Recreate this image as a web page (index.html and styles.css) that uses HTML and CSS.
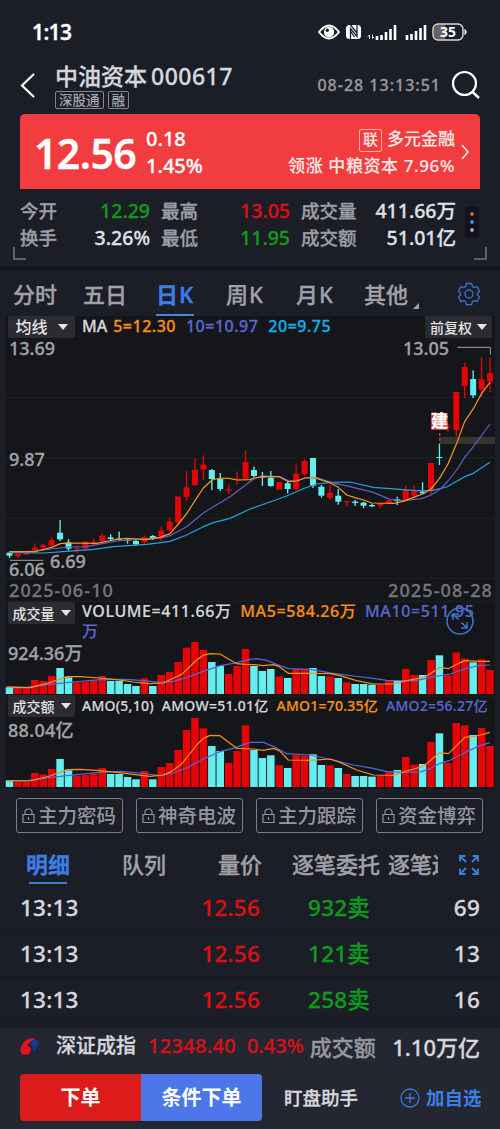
FILE: index.html
```html
<!DOCTYPE html>
<html lang="zh-CN">
<head>
    <meta charset="UTF-8">
    <meta name="viewport" content="width=device-width, initial-scale=1.0">
    <title>中油资本 000617</title>
    <link rel="stylesheet" href="styles.css">
</head>
<body>

    <div class="status">
        <span class="clock">1:13</span>
        <svg class="status-icons" width="152" height="20" viewBox="0 0 152 20">
            <path d="M3 10 Q13 -3 23 10 Q13 23 3 10Z" fill="none" stroke="#fff" stroke-width="2"/>
            <circle cx="13" cy="10" r="5.2" fill="#fff"/>
            <circle cx="11.300" cy="8.200" r="1.700" fill="#1b1d27"/>
            <rect x="30" y="3" width="15" height="14" rx="3.500" fill="#fff"/>
            <path d="M34.500 17V6.500l6.500 8V3M34.500 3l6.500 8M34.500 9l4 6" fill="none" stroke="#1b1d27" stroke-width="1.300"/>
            <path d="M53.500 13v4M52 14.500l1.500-1.500M56.500 12.500v4l1.500-1.500" fill="none" stroke="#fff" stroke-width="1"/>
            <path d="M61 18v-4M65.500 18v-5M70 18v-8M74.500 18V7M79 18V3" stroke="#fff" stroke-width="2.600"/>
            <path d="M91 18v-5M95.500 18v-6M100 18V9M104.500 18V6M109 18V3" stroke="#fff" stroke-width="2.600"/>
            <rect x="117" y="2" width="30" height="16" rx="5" fill="#1b1d27" stroke="#ddd" stroke-width="1.400"/>
            <path d="M122 3h7v14h-7q-4 0-4-4V7q0-4 4-4z" fill="#62636b"/>
            <path d="M149 7.500q2.500 2.500 0 5z" fill="#fff" stroke="#fff"/>
            <text x="132" y="15" text-anchor="middle" class="battery">35</text>
        </svg>
    </div>

    <div class="header">
        <svg class="back" width="16" height="26" viewBox="0 0 16 26"><path d="M14 2L2 13.500 14 25" fill="none" stroke="#fff" stroke-width="2.200"/></svg>
        <div class="stock">
            <div class="stock-name">中油资本<span>000617</span></div>
            <div class="tags"><span>深股通</span><span>融</span></div>
        </div>
        <span class="datetime">08-28 13:13:51</span>
        <svg width="30" height="30" viewBox="0 0 30 30"><circle cx="13.500" cy="13.500" r="11.500" fill="none" stroke="#fff" stroke-width="2.200"/><path d="M21.500 22l6.500 6" stroke="#fff" stroke-width="2.400"/></svg>
    </div>

    <div class="quote">
        <span class="price">12.56</span>
        <div class="change"><span>0.18</span><span>1.45%</span></div>
        <div class="sector">
            <div><i>联</i>多元金融</div>
            <div class="leader">领涨 中粮资本 7.96%</div>
        </div>
        <svg width="9" height="16" viewBox="0 0 9 16"><path d="M1 1l6 7-6 7" fill="none" stroke="#fff" stroke-width="1.300"/></svg>
    </div>

    <div class="stats">
        <div class="stats-grid">
            <span>今开</span><b class="green">12.29</b><span>最高</span><b class="red">13.05</b><span>成交量</span><b>411.66万</b>
            <span>换手</span><b>3.26%</b><span>最低</span><b class="green">11.95</b><span>成交额</span><b>51.01亿</b>
        </div>
        <div class="dots"><i></i><i></i><i></i></div>
        <div class="corners"></div>
    </div>

    <div class="period">
        <span>分时</span>
        <span>五日</span>
        <span class="k on">日K</span>
        <span class="k">周K</span>
        <span class="k">月K</span>
        <span class="more">其他</span>
        <svg class="gear" width="24" height="24" viewBox="0 0 24 24" fill="none" stroke="#3a76d0" stroke-width="1.300" stroke-linejoin="round">
            <path d="M9.300 1.500h5.400l.7 3 1.600 1 3-.9 2.600 4.600-2.200 2.200v1.400l2.200 2.200-2.600 4.600-3-.9-1.600 1-.7 3H9.300l-.7-3-1.600-1-3 .9L1.400 15l2.200-2.200v-1.400L1.400 9.200 4 4.600l3 .9 1.600-1z"/>
            <circle cx="12" cy="12" r="4"/>
        </svg>
    </div>

    <div class="charts">
        <div class="legend">
            <span class="select">均线<i></i></span>
            <span class="ma">MA</span>
            <span class="ma ma5">5=12.30</span>
            <span class="ma ma10">10=10.97</span>
            <span class="ma ma20">20=9.75</span>
            <span class="select right">前复权<i></i></span>
        </div>

        <div class="panel kline">
            <svg id="kline" width="500" height="262" viewBox="0 24 1500 786"></svg>
            <span class="label l-top">13.69</span>
            <span class="label l-mid">9.87</span>
            <span class="label l-bot">6.06</span>
            <span class="label l-low">6.69</span>
            <span class="label l-high">13.05</span>
            <span class="build">建</span>
            <div class="dates"><span>2025-06-10</span><span>2025-08-28</span></div>
        </div>

        <div class="panel volume">
            <svg id="volume" width="500" height="96" viewBox="0 15 1500 288"></svg>
            <span class="select over">成交量<i></i></span>
            <div class="vol-text">VOLUME=411.66万&ensp;<span class="ma5">MA5=584.26万</span>&ensp;<span class="ma10">MA10=511.95<br>万</span></div>
            <span class="label l-vol">924.36万</span>
            <svg class="expand" width="28" height="28" viewBox="0 0 28 28" fill="none" stroke="#3a76d0" stroke-width="1.600">
                <circle cx="14" cy="14" r="13"/>
                <path d="M7 13V7h6M7 7l5.500 5.500M21 15v6h-6M21 21l-5.500-5.500"/>
            </svg>
        </div>

        <div class="panel amount">
            <svg id="amount" width="500" height="93" viewBox="0 303 1500 279"></svg>
            <span class="select over">成交额<i></i></span>
            <div class="amo-text"><span>AMO(5,10)</span><span>AMOW=51.01亿</span><span class="ma5">AMO1=70.35亿</span><span class="ma10">AMO2=56.27亿</span></div>
            <span class="label l-amo">88.04亿</span>
        </div>
    </div>

    <div class="locks">
        <span><svg width="13" height="16" viewBox="0 0 13 16"><path d="M1 6.500h11v8H1zM3 6.500V4q0-3 3.500-3T10 4v2.500M6.500 9v3"/></svg>主力密码</span>
        <span><svg width="13" height="16" viewBox="0 0 13 16"><path d="M1 6.500h11v8H1zM3 6.500V4q0-3 3.500-3T10 4v2.500M6.500 9v3"/></svg>神奇电波</span>
        <span><svg width="13" height="16" viewBox="0 0 13 16"><path d="M1 6.500h11v8H1zM3 6.500V4q0-3 3.500-3T10 4v2.500M6.500 9v3"/></svg>主力跟踪</span>
        <span><svg width="13" height="16" viewBox="0 0 13 16"><path d="M1 6.500h11v8H1zM3 6.500V4q0-3 3.500-3T10 4v2.500M6.500 9v3"/></svg>资金博弈</span>
    </div>

    <div class="detail-tabs">
        <span class="on">明细</span>
        <span>队列</span>
        <span>量价</span>
        <span>逐笔委托</span>
        <span class="cut">逐笔还原</span>
        <svg width="20" height="20" viewBox="0 0 20 20" fill="none" stroke="#3a80e0" stroke-width="1.800"><path d="M1 6.500V1h5.500M1 1l6 6M13.500 1H19v5.500M19 1l-6 6M1 13.500V19h5.500M1 19l6-6M19 13.500V19h-5.500M19 19l-6-6"/></svg>
    </div>

    <div class="trades">
        <div><span>13:13</span><span class="red">12.56</span><span class="green">932卖</span><span>69</span></div>
        <div><span>13:13</span><span class="red">12.56</span><span class="green">121卖</span><span>13</span></div>
        <div><span>13:13</span><span class="red">12.56</span><span class="green">258卖</span><span>16</span></div>
    </div>

    <div class="footer">
        <div class="index">
            <svg width="20" height="20" viewBox="0 0 20 20">
                <path d="M11 4Q18 0 18.500 6Q18 11 13.500 14Q13 9 10.500 8Z" fill="#143a94"/>
                <path d="M16 1.500Q6 0 2 8Q-2 15 3 17.500Q10 19 11 13Q11 9 7.500 9.500Q9 4 16 1.500Z" fill="#e01424"/>
            </svg>
            <span class="idx-name">深证成指</span>
            <span class="idx-num">12348.40</span>
            <span class="idx-pct">0.43%</span>
            <span class="idx-label">成交额</span>
            <span class="idx-total">1.10万亿</span>
        </div>
        <div class="actions">
            <span class="order">下单</span>
            <span class="cond">条件下单</span>
            <span class="helper">盯盘助手</span>
            <span class="add"><svg width="20" height="20" viewBox="0 0 20 20" fill="none" stroke="#3a7be0" stroke-width="1.300"><circle cx="10" cy="10" r="9"/><path d="M10 5v10M5 10h10"/></svg>加自选</span>
        </div>
    </div>

    <script src="chart.js"></script>
</body>
</html>
```
FILE: styles.css
```css
body {
    margin: 0;
    width: 500px;
    height: 1129px;
    overflow: hidden;
    background: #1b1d27;
    color: #d6d7db;
    font-family: "Noto Sans", "Noto Sans CJK SC", sans-serif;
    font-weight: 500;
    -webkit-text-stroke: 0.3px;
}
div, span, svg {
    box-sizing: border-box;
}
span, b {
    white-space: nowrap;
}
svg {
    display: block;
    flex: none;
}
i {
    font-style: normal;
}
.red { color: #dc0f14 !important; }
.green { color: #0f9a1b !important; }
.ma5 { color: #f78f14; }
.ma10 { color: #5867cf; }
.ma20 { color: #14aee6; }

/* status bar */
.status {
    height: 62px;
    padding: 1px 32px 0;
    display: flex;
    align-items: center;
    justify-content: space-between;
}
.clock {
    color: #fff;
    font-size: 21px;
    font-weight: 600;
    letter-spacing: -0.6px;
}
.battery {
    fill: #fff;
    font-size: 14px;
    font-weight: 700;
    -webkit-text-stroke: 0;
}

/* title */
.header {
    height: 52px;
    padding: 0 19px 0 20px;
    display: flex;
    align-items: center;
}
.header > svg {
    margin-top: -6px;
}
.header > .back {
    margin-top: -6px;
}
.stock {
    margin-left: 19px;
    flex: 1;
}
.stock-name {
    font-size: 23px;
    line-height: 26px;
    height: 28px;
    white-space: nowrap;
}
.stock-name span {
    margin-left: 4px;
    letter-spacing: 0.5px;
}
.tags {
    display: flex;
    gap: 4px;
    height: 18px;
    margin-bottom: 4px;
}
.tags span {
    border: 1px solid #85868e;
    border-radius: 2px;
    padding: 0 3px;
    color: #a5a6ad;
    font-size: 13.500px;
    line-height: 16px;
    -webkit-text-stroke: 0;
}
.datetime {
    color: #96979e;
    font-size: 16px;
    letter-spacing: 1px;
    margin: -6px 10px 0 0;
}

/* red quote card */
.quote {
    height: 75px;
    margin: 0 20px;
    padding: 0 10px 0 14px;
    border-radius: 5px 5px 0 0;
    background: #f13d3f;
    color: #fff;
    display: flex;
    align-items: center;
}
.price {
    font-size: 41px;
    font-weight: 600;
    letter-spacing: -0.6px;
    width: 112px;
    padding-top: 2px;
}
.change, .sector {
    display: flex;
    flex-direction: column;
    font-size: 20px;
    line-height: 27px;
    padding-top: 1px;
}
.sector {
    flex: 1;
    align-items: flex-end;
    font-size: 17px;
    margin-right: 6px;
    white-space: nowrap;
    color: #ffe8e6;
    -webkit-text-stroke: 0.1px;
}
.leader {
    letter-spacing: 0.6px;
}
.sector i {
    display: inline-block;
    width: 21px;
    height: 21px;
    border: 1px solid #f9b0b0;
    border-radius: 2px;
    font-size: 15px;
    line-height: 19px;
    text-align: center;
    margin-right: 5px;
}

/* stats */
.stats {
    position: relative;
    height: 77px;
    padding: 8px 20px 0;
    display: flex;
}
.stats-grid {
    width: 436px;
    display: grid;
    grid-template-columns: 40px 90px 50px 90px 65px 101px;
    grid-template-rows: 27px 27px;
    line-height: 27px;
    font-size: 18.500px;
    color: #9d9ea5;
}
.stats-grid span {
    padding-left: 11px;
}
.stats-grid span:nth-child(6n+1) {
    padding-left: 0;
}
.stats-grid b {
    text-align: right;
    font-weight: 500;
    font-size: 19.500px;
    color: #dfe0e4;
}
.dots {
    width: 14px;
    height: 32px;
    margin: 9px 0 0 9px;
    border-radius: 4px;
    background: #12131a;
    display: flex;
    flex-direction: column;
    align-items: center;
    justify-content: center;
    gap: 4px;
}
.dots i {
    width: 4px;
    height: 4px;
    border-radius: 50%;
    background: #c1663a;
}
.dots i:nth-child(2) { background: #4585dc; }
.dots i:nth-child(3) { background: #aaa; }
.corners::before, .corners::after {
    content: "";
    position: absolute;
    bottom: 6px;
    width: 11px;
    height: 11px;
    border-bottom: 2px solid #5f6169;
}
.corners::before {
    left: 13px;
    border-left: 2px solid #5f6169;
}
.corners::after {
    right: 13px;
    border-right: 2px solid #5f6169;
}

/* period tabs */
.period {
    height: 50px;
    border-top: 5px solid #14151b;
    padding: 0 19px 0 13px;
    display: flex;
    align-items: center;
    font-size: 22px;
    line-height: 44px;
    color: #a1a2a8;
}
.period span {
    height: 44px;
    margin-right: 26px;
}
.period .k {
    width: 38px;
    margin-right: 32px;
    letter-spacing: 1px;
}
.period .k.on {
    color: #3b7fe5;
    font-weight: 600;
    border-bottom: 2px solid #4b86dc;
    margin-left: 3px;
}
.period .more {
    position: relative;
    margin: 0 0 0 -2px;
}
.more::after {
    content: "";
    position: absolute;
    right: -11px;
    bottom: 7px;
    border: 3.500px solid #a1a2a8;
    border-top-color: transparent;
    border-left-color: transparent;
}
.period .gear {
    margin-left: auto;
}

/* charts */
.charts {
    height: 473px;
    background: linear-gradient(90deg, #1b1d27 6px, #15161a 6px, #15161a 495px, #1b1d27 495px);
}
.legend {
    height: 22px;
    padding: 0 8px;
    display: flex;
    align-items: center;
    font-size: 16px;
    line-height: 20px;
}
.select {
    height: 22px;
    width: 67px;
    background: #2b2c31;
    border-radius: 2px;
    color: #e4e4e6;
    font-size: 16px;
    line-height: 21px;
    display: flex;
    align-items: center;
    justify-content: center;
    gap: 10px;
    -webkit-text-stroke: 0;
}
.select i {
    border: 5px solid transparent;
    border-top: 6px solid #e4e4e6;
    border-bottom: 0;
}
.select.right {
    margin-left: auto;
    font-size: 14px;
    gap: 5px;
}
.ma {
    margin: -2px 0 0 7px;
}
.ma5.ma {
    margin-left: 6px;
    letter-spacing: 0.5px;
}
.ma10.ma, .ma20.ma {
    margin-left: 10px;
    letter-spacing: 0.5px;
}
.panel {
    position: relative;
}
.kline { height: 262px; }
.volume { height: 96px; }
.amount { height: 93px; }
.label {
    position: absolute;
    font-size: 18px;
    line-height: 20px;
    color: #a1a2a6;
}
.l-top { left: 9px; top: 0; }
.l-mid { left: 9px; top: 111px; }
.l-bot { left: 9px; top: 221px; }
.l-low { left: 50px; top: 213px; }
.l-high { right: 51px; top: 0; }
.l-vol { left: 8px; top: 43px; }
.l-amo { left: 8px; top: 24px; letter-spacing: 0.3px; }
.build {
    position: absolute;
    left: 431px;
    top: 75px;
    width: 17px;
    height: 17px;
    background: #c7372c;
    color: #fff;
    font-size: 17px;
    font-weight: 700;
    line-height: 16px;
}
.dates {
    position: absolute;
    left: 9px;
    right: 7px;
    top: 242px;
    display: flex;
    justify-content: space-between;
    font-size: 18px;
    line-height: 20px;
    letter-spacing: 1.1px;
    color: #74757b;
}
.select.over {
    position: absolute;
    left: 8px;
    top: 2px;
    font-size: 14px;
    gap: 6px;
}
.amount .over {
    top: -1px;
}
.vol-text {
    position: absolute;
    left: 82px;
    top: 1px;
    font-size: 16px;
    line-height: 20px;
    letter-spacing: 0.6px;
    white-space: nowrap;
    -webkit-text-stroke: 0.2px;
}
.amo-text {
    position: absolute;
    left: 82px;
    top: 0;
    display: flex;
    gap: 8px;
    font-size: 14px;
    line-height: 20px;
    letter-spacing: 0.25px;
    -webkit-text-stroke: 0.2px;
}
.expand {
    position: absolute;
    left: 446px;
    top: 7px;
}

/* locked indicators */
.locks {
    padding: 9px 16px 0;
    height: 56px;
    display: flex;
    gap: 13px;
}
.locks span {
    width: 107px;
    height: 35px;
    border: 1px solid #7d7e87;
    border-radius: 3px;
    color: #94959d;
    font-size: 19.500px;
    line-height: 33px;
    display: flex;
    align-items: center;
    padding-left: 5px;
    gap: 3px;
    -webkit-text-stroke: 0;
}
.locks svg {
    fill: none;
    stroke: #94959d;
    stroke-width: 1.2;
}

/* tick list */
.detail-tabs {
    height: 40px;
    padding: 0 21px 0 26px;
    display: flex;
    align-items: center;
    font-size: 22px;
    line-height: 39px;
    color: #a1a2a8;
}
.detail-tabs span {
    height: 40px;
    margin-right: 52px;
}
.detail-tabs .on {
    position: relative;
    color: #3b7fe5;
    font-weight: 600;
}
.detail-tabs .on::after {
    content: "";
    position: absolute;
    left: 3px;
    bottom: 1px;
    width: 38px;
    height: 2px;
    background: #3c80d6;
}
.detail-tabs span:nth-child(3) { margin-right: 30px; }
.detail-tabs span:nth-child(4) { margin-right: 8px; }
.detail-tabs .cut {
    width: 50px;
    overflow: hidden;
    margin: 0 auto 0 0;
}
.trades {
    height: 143px;
}
.trades div {
    height: 46px;
    padding: 0 20px;
    display: grid;
    grid-template-columns: 120px 120px 110px 110px;
    line-height: 46px;
    font-size: 22.500px;
    border-bottom: 1px solid #171921;
    letter-spacing: 0.2px;
}
.trades span:nth-child(n+2) {
    text-align: right;
}

/* bottom bar */
.footer {
    height: 101px;
    background: #242632;
}
.index {
    height: 38px;
    margin-bottom: 8px;
    padding: 0 20px;
    display: flex;
    align-items: center;
    line-height: 36px;
}
.index span {
    height: 38px;
}
.index .idx-label, .index .idx-total {
    line-height: 39px;
}
.idx-name { font-size: 20px; margin-left: 16px; }
.idx-num { font-size: 20px; letter-spacing: 0.3px; margin-left: 12px; color: #d81018; }
.idx-pct { font-size: 20px; margin-left: 11px; color: #d81018; }
.idx-label { font-size: 22px; margin-left: 6px; color: #96979e; }
.idx-total { font-size: 22px; margin-left: auto; }
.actions {
    display: flex;
    align-items: center;
    height: 47px;
    padding-left: 20px;
    line-height: 47px;
    font-size: 20px;
}
.order, .cond {
    width: 121px;
    text-align: center;
    color: #fff;
    font-weight: 700;
    background: #dc1b1b;
    border-radius: 4px 0 0 4px;
    -webkit-text-stroke: 0;
}
.cond {
    background: #4b77e8;
    border-radius: 0 4px 4px 0;
}
.helper {
    font-size: 18.500px;
    margin-left: 22px;
    padding-right: 22px;
}
.add {
    display: flex;
    align-items: center;
    gap: 6px;
    color: #3b7fe5;
    font-size: 18.500px;
    font-weight: 600;
    margin-left: 20px;
    -webkit-text-stroke: 0;
}
```
FILE: chart.js
```js
const RED = "#e60306";
const CYAN = "#66eeee";
const STEP = 25.29;

// r = up, c = down
const days = "crrrrrccrrrrccccrcrrrrrrccrrrcccrcrrccrcrcccrrcrrcrcrrrcrr";

// body top, body bottom, wick top, wick bottom
const candles = [
    [668,677,665,684],[672,679,670,684],[668,674,667,676],[653,661,640,664],[645,652,641,656],
    [630,646,621,650],[608,628,570,633],[637,656,627,662],[655,658,648,670],[635,655,634,661],
    [636,642,627,648],[617,633,610,636],[622,627,613,632],[626,629,605,632],[629,632,625,641],
    [633,643,630,647],[621,636,616,642],[618,626,615,630],[602,620,590,633],[575,600,563,606],
    [500,577,500,580],[472,501,423,512],[420,466,386,466],[404,419,376,450],[420,447,417,480],
    [447,477,429,483],[478,482,464,492],[446,449,424,465],[396,446,362,450],[420,438,410,442],
    [440,443,426,468],[443,468,423,470],[456,479,456,479],[460,477,455,490],[431,477,405,482],
    [393,432,387,437],[384,467,384,474],[470,497,465,503],[488,503,464,510],[497,515,477,524],
    [513,517,513,530],[515,519,509,528],[518,527,515,534],[525,529,521,531],[519,527,518,534],
    [511,519,509,522],[508,513,500,525],[480,511,467,514],[484,497,466,509],[485,490,457,492],
    [399,482,399,494],[381,384,341,405],[289,292,280,305],[186,300,186,320],[111,168,98,204],
    [147,196,121,204],[148,178,83,200],[129,155,82,186]
];

const volumes = [277,279,279,255,258,243,219,247,262,259,255,243,258,258,267,273,250,273,240,231,201,158,141,165,201,213,237,213,162,
    213,228,222,244,249,222,222,219,243,244,249,262,267,267,269,269,258,256,222,240,240,195,181,241,172,190,202,193,225];
const amounts = [556,560,560,534,538,522,492,526,542,540,536,519,537,537,546,553,528,553,516,504,465,405,369,400,453,468,504,468,391,
    465,489,481,511,519,480,482,478,510,511,519,537,543,543,545,543,528,525,486,509,507,441,415,504,384,391,420,399,453];

function x(i) {
    return 28.5 + i * STEP;
}

function rect(cx, top, bottom, w, color) {
    return `<rect x="${cx - w / 2}" y="${top}" width="${w}" height="${bottom - top}" fill="${color}"/>`;
}

function line(points, color) {
    return `<polyline points="${points}" fill="none" stroke="${color}" stroke-width="3.6" stroke-linejoin="round"/>`;
}

function grid(ys) {
    return ys.map(y => `<path d="M18 ${y}H1485" stroke="#212228" stroke-width="3"/>`).join("");
}

function color(i) {
    return days[i] === "r" ? RED : CYAN;
}

function drawKline() {
    let out = grid([203, 384, 565, 745]);
    out += `<rect x="1320" y="321" width="165" height="21" fill="#34352f"/>`;
    candles.forEach((c, i) => {
        out += rect(x(i), c[2], c[3], 4, color(i)) + rect(x(i), c[0], c[1], 18, color(i));
    });
    out += line("28,668 130,669 200,664 280,658 340,650 440,643 510,634 560,615 610,590 640,578 690,565 750,537 810,516 860,498 915,474 950,462 995,457 1050,456 1120,472 1170,476 1250,482 1295,482 1340,471 1394,440 1420,430 1470,397", "#22a3e0");
    out += line("28,667 105,663 155,657 206,651 260,650 350,633 420,628 490,623 510,617 560,590 610,549 640,530 690,500 750,455 762,446 790,439 838,440 865,452 890,453 915,444 950,443 995,458 1050,470 1120,487 1170,508 1210,512 1265,506 1293,495 1320,478 1344,453 1370,420 1394,382 1420,350 1470,282", "#6060c4");
    out += line("28,665 105,665 155,652 181,641 206,639 290,640 350,628 380,625 440,629 480,622 510,611 535,582 560,551 585,512 610,474 636,450 660,444 687,445 712,450 750,449 762,444 790,439 838,440 865,455 890,453 915,444 940,442 970,452 990,458 1015,472 1040,495 1065,503 1091,510 1116,519 1180,520 1210,514 1240,502 1268,492 1293,477 1318,446 1344,402 1370,340 1394,275 1420,236 1445,190 1470,157", "#f5962a");
    // high and low markers
    out += `<path d="M1372 52H1471V74M30 691H130" fill="none" stroke="#a1a2a6" stroke-width="3"/>`;
    out += `<path d="M1319 309V336" stroke="#e0343a" stroke-width="4" stroke-dasharray="9 5"/>`;
    document.getElementById("kline").innerHTML = out;
}

function drawBars(id, tops, base, fast, slow) {
    let out = grid([id === "volume" ? 19 : 303]);
    tops.forEach((t, i) => {
        out += rect(x(i), t, base, 22.5, color(i));
    });
    out += line(slow, "#4f6ad8") + line(fast, "#f5901e");
    document.getElementById(id).innerHTML = out;
}

drawKline();
drawBars("volume", volumes, 297,
    "20,277 90,278 150,263 200,245 240,245 300,249 350,254 400,261 450,266 490,264 515,252 545,238 590,195 610,181 630,176 660,177 710,206 735,208 762,209 790,212 820,209 838,215 865,235 930,235 990,236 1020,242 1070,257 1120,267 1180,267 1220,257 1270,248 1293,235 1320,217 1345,221 1370,208 1394,197 1440,199 1470,199",
    "20,275 80,277 150,268 200,263 250,258 300,254 380,253 420,256 480,262 520,259 560,248 610,229 660,212 700,205 750,193 770,191 800,196 830,208 865,221 930,223 1000,235 1060,243 1120,250 1160,256 1250,257 1290,247 1350,237 1400,220 1440,211 1470,210");
drawBars("amount", amounts, 576,
    "20,557 90,558 150,543 200,524 240,523 300,527 350,532 400,538 450,544 490,540 515,529 545,507 590,450 610,430 630,421 660,422 710,460 762,462 790,466 820,460 838,467 865,495 930,496 990,492 1020,502 1070,525 1120,540 1180,541 1220,528 1270,514 1293,495 1318,473 1345,476 1370,452 1394,427 1430,423 1470,412",
    "20,557 80,557 150,548 200,542 300,532 360,529 420,534 480,542 520,534 560,519 610,492 660,470 700,460 750,442 790,442 820,454 860,476 930,480 1000,495 1060,510 1120,520 1160,530 1220,532 1265,530 1293,520 1320,505 1350,496 1400,470 1440,452 1470,443");
```
